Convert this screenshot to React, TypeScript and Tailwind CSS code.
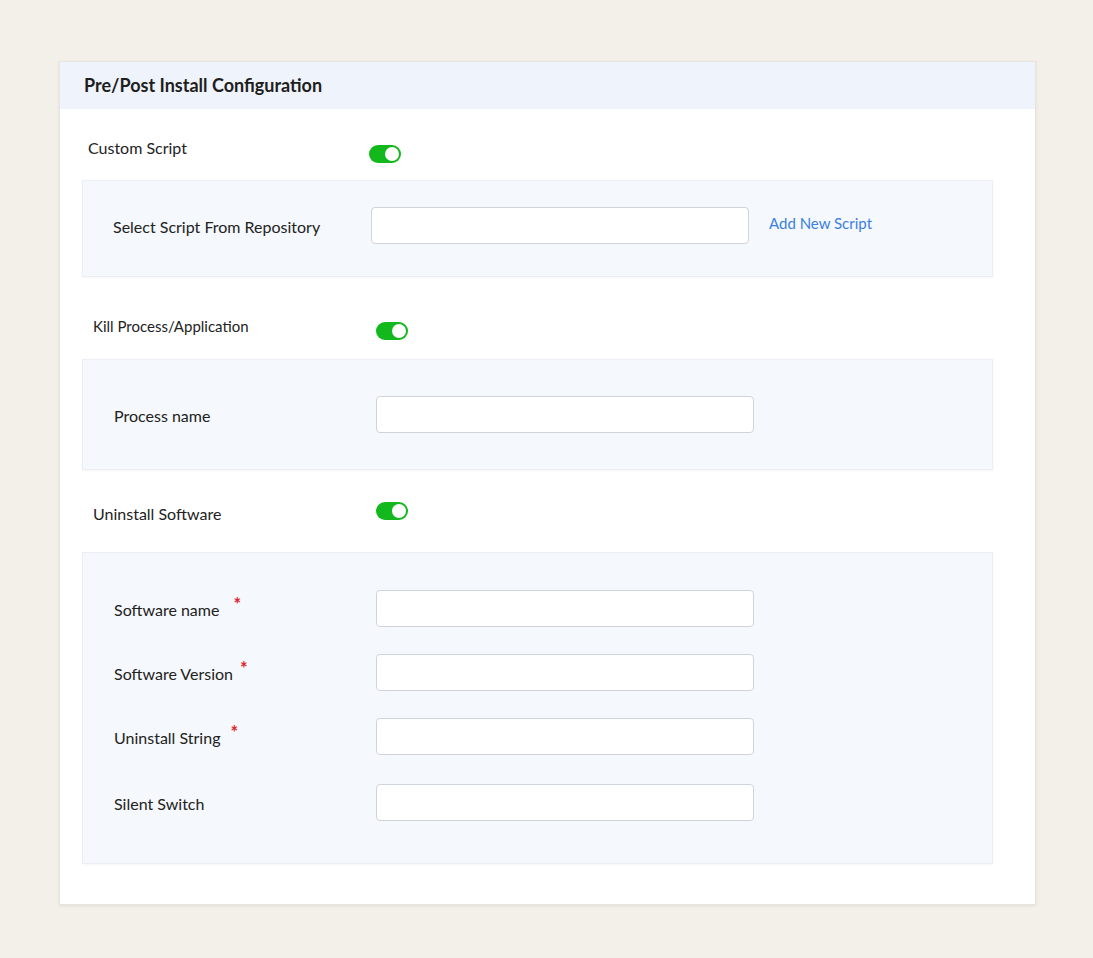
import React from "react";

const font = { fontFamily: "Lato, 'Open Sans', sans-serif" };

function Toggle() {
  return (
    <div className="relative h-[18px] w-[32px] shrink-0 rounded-full bg-[#12b81c]">
      <div className="absolute right-[2px] top-[2px] h-[14px] w-[14px] rounded-full bg-white" />
    </div>
  );
}

function Input() {
  return <div className="h-[37px] w-[378px] shrink-0 rounded-[4px] border border-[#cfd4da] bg-white" />;
}

function Req({ gap }: { gap: string }) {
  return <span className={`${gap} relative -top-[6px] text-[18px] font-bold leading-none text-[#e0242b]`}>*</span>;
}

function FieldRow({ label, star }: { label: string; star?: string }) {
  return (
    <div className="flex items-center">
      <div className="flex w-[293px] items-center pl-[31px] pt-[3px] text-[16px] leading-[20px] text-[#222]">
        {label}
        {star && <Req gap={star} />}
      </div>
      <Input />
    </div>
  );
}

export default function App() {
  return (
    <div className="min-h-[958px] w-full bg-[#f3efe9] pt-[61px]" style={font}>
      <div className="ml-[59px] w-[977px] border border-[#e8e4de] bg-white shadow-[0_1px_3px_rgba(0,0,0,0.08)]">
        <div className="flex h-[47px] items-center bg-[#eff3fb] pl-[24px] text-[18px] font-bold text-[#1e1e1e]">
          Pre/Post Install Configuration
        </div>

        <div className="pb-[40px] pl-[22px] pr-[42px]">
          {/* Custom Script */}
          <div className="flex h-[71px] items-start pt-[29px]">
            <div className="w-[287px] pl-[6px] text-[16px] leading-[20px] text-[#222]">Custom Script</div>
            <div className="mt-[7px]">
              <Toggle />
            </div>
          </div>
          <div className="flex items-center border border-[#ebeef2] bg-[#f5f8fc] pb-[32px] pt-[26px] shadow-[0_1px_2px_rgba(0,0,0,0.04)]">
            <div className="w-[288px] pl-[30px] pt-[3px] text-[16px] leading-[20px] text-[#222]">
              Select Script From Repository
            </div>
            <Input />
            <a className="-mt-[4px] ml-[20px] text-[15px] text-[#3b7fe0]">Add New Script</a>
          </div>

          {/* Kill Process */}
          <div className="flex h-[82px] items-start pt-[39px]">
            <div className="w-[294px] pl-[11px] text-[15px] leading-[20px] text-[#222]">Kill Process/Application</div>
            <div className="mt-[6px]">
              <Toggle />
            </div>
          </div>
          <div className="border border-[#ebeef2] bg-[#f5f8fc] pb-[36px] pt-[36px] shadow-[0_1px_2px_rgba(0,0,0,0.04)]">
            <FieldRow label="Process name" />
          </div>

          {/* Uninstall Software */}
          <div className="flex h-[82px] items-start pt-[32px]">
            <div className="mt-[2px] w-[294px] pl-[11px] text-[16px] leading-[20px] text-[#222]">Uninstall Software</div>
            <Toggle />
          </div>
          <div className="flex flex-col border border-[#ebeef2] bg-[#f5f8fc] pb-[42px] pt-[37px] shadow-[0_1px_2px_rgba(0,0,0,0.04)]">
            <FieldRow label="Software name" star="ml-[14px]" />
            <div className="h-[27px]" />
            <FieldRow label="Software Version" star="ml-[7px]" />
            <div className="h-[27px]" />
            <FieldRow label="Uninstall String" star="ml-[10px]" />
            <div className="h-[29px]" />
            <FieldRow label="Silent Switch" />
          </div>
        </div>
      </div>
    </div>
  );
}
